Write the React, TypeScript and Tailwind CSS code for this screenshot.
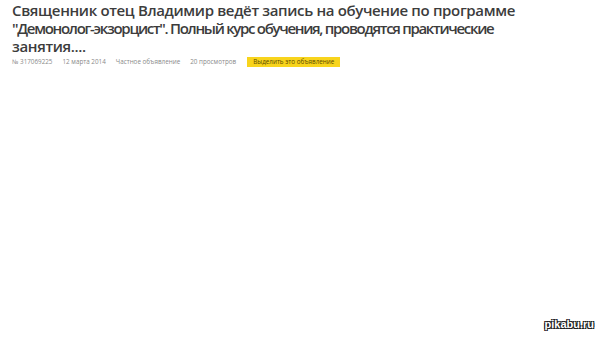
export default function App() {
  return (
    <div className="relative w-[600px] h-[337px] bg-white overflow-hidden" style={{ fontFamily: '"Open Sans", sans-serif' }}>
      <div className="pl-[12px] pr-[20px] pt-[1px]">
        <h1 className="text-[15px] leading-[18px] font-semibold text-[#3c3c3c] whitespace-nowrap">
          <span className="block tracking-[-0.35px]">Священник отец Владимир ведёт запись на обучение по программе</span>
          <span className="block tracking-[-1.3px]">"Демонолог-экзорцист". Полный курс обучения, проводятся практические</span>
          <span className="block tracking-[-0.35px]">занятия....</span>
        </h1>
        <div className="mt-[2px] flex items-center text-[6.3px] text-[#8a8a8a] leading-none">
          <span>№ 317069225</span>
          <span className="ml-[10px]">12 марта 2014</span>
          <span className="ml-[10px]">Частное объявление</span>
          <span className="ml-[10px]">20 просмотров</span>
          <span className="ml-[11px] bg-[#f8d41c] text-[#5a4a00] px-[6px] py-[2px]">Выделить это объявление</span>
        </div>
      </div>
      <div
        className="absolute right-[6px] bottom-[7px] text-[11px] font-bold text-white leading-none"
        style={{ fontFamily: '"Liberation Sans", sans-serif', textShadow: '0 0 1px #222, 1px 1px 0 #222, -1px -1px 0 #222, 1px -1px 0 #222, -1px 1px 0 #222' }}
      >
        pikabu.ru
      </div>
    </div>
  )
}
